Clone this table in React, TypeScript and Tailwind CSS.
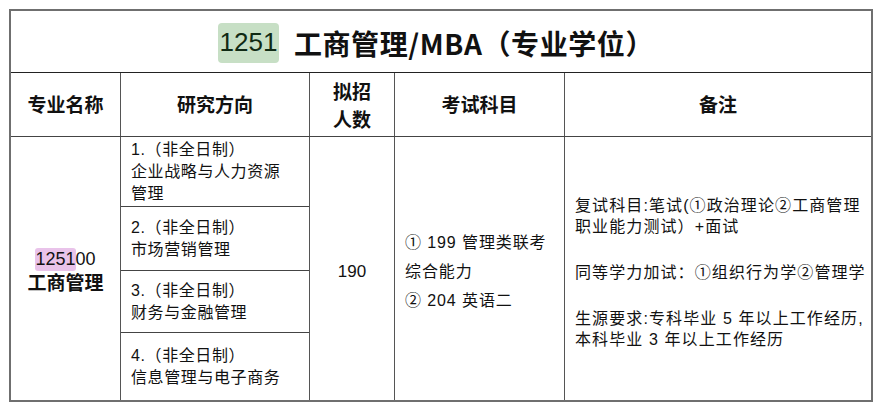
const cjk = "font-['Liberation_Sans','Noto_Sans_CJK_SC',sans-serif]";

const directions = [
  { h: "h-[70px]", lines: ["1.（非全日制）", "企业战略与人力资源", "管理"] },
  { h: "h-[64px]", lines: ["2.（非全日制）", "市场营销管理"] },
  { h: "h-[62px]", lines: ["3.（非全日制）", "财务与金融管理"] },
  { h: "h-[67px]", lines: ["4.（非全日制）", "信息管理与电子商务"] },
];

const headers = ["专业名称", "研究方向", null, "考试科目", "备注"];

export default function App() {
  return (
    <div className={`min-h-[414px] w-[887px] bg-white pt-[9px] pl-[9px] text-[#111] ${cjk}`}>
      <div className="w-[864px] border-2 border-[#6f6f6f]">
        {/* Title */}
        <div className="flex h-[62px] items-center justify-center border-b border-[#222] pr-[10px] pt-[2px]">
          <span className="mr-[15px] flex h-[40px] w-[61px] items-center justify-center rounded-[4px] bg-[#c7dfc5] font-['Liberation_Sans'] text-[26px] text-[#102a14]">
            1251
          </span>
          <span className="font-['Noto_Sans_CJK_SC'] text-[28px] font-semibold leading-none tracking-[0.6px]">
            工商管理/MBA（专业学位）
          </span>
        </div>

        {/* Header */}
        <div className="grid h-[64px] grid-cols-[110px_189px_85px_170px_1fr] border-b border-[#444] font-['Noto_Sans_CJK_SC'] text-[19px] font-bold">
          {headers.map((h, i) => (
            <div
              key={i}
              className={`flex items-center justify-center ${i < 4 ? "border-r border-[#555]" : ""}`}
            >
              {h ?? (
                <span className="text-center leading-[28px]">
                  拟招
                  <br />
                  人数
                </span>
              )}
            </div>
          ))}
        </div>

        {/* Body */}
        <div className="grid grid-cols-[110px_189px_85px_170px_1fr] text-[16px]">
          <div className="flex flex-col items-center justify-center border-r border-[#555] pt-[4px]">
            <span className="font-['Liberation_Sans'] text-[18px] leading-[22px]">
              <span className="rounded-[3px] bg-[#e9c3ea] pb-[2px] pt-[1px]">1251</span>00
            </span>
            <span className="font-['Noto_Sans_CJK_SC'] text-[19px] font-bold leading-[24px]">工商管理</span>
          </div>

          <div className="flex flex-col border-r border-[#555]">
            {directions.map((d, i) => (
              <div
                key={i}
                className={`flex ${d.h} flex-col justify-center pl-[10px] leading-[22px] tracking-[0.6px] ${
                  i < directions.length - 1 ? "border-b border-[#444]" : ""
                }`}
              >
                {d.lines.map((l) => (
                  <span key={l} className="whitespace-nowrap">
                    {l}
                  </span>
                ))}
              </div>
            ))}
          </div>

          <div className="flex items-center justify-center border-r border-[#555] pt-[6px] font-['Liberation_Sans'] text-[17px]">
            190
          </div>

          <div className="flex flex-col justify-center border-r border-[#555] pl-[10px] pt-[5px] leading-[29px] tracking-[0.9px]">
            <span className="whitespace-nowrap">① 199 管理类联考</span>
            <span>综合能力</span>
            <span className="whitespace-nowrap">② 204 英语二</span>
          </div>

          <div className="flex flex-col justify-center pl-[10px] pt-[8px] leading-[21px] tracking-[1.1px]">
            <p className="whitespace-nowrap">
              复试科目:笔试(①政治理论②工商管理
              <br />
              职业能力测试）+面试
            </p>
            <p className="mt-[25px] whitespace-nowrap">同等学力加试：①组织行为学②管理学</p>
            <p className="mt-[25px] whitespace-nowrap">
              生源要求:专科毕业 5 年以上工作经历,
              <br />
              本科毕业 3 年以上工作经历
            </p>
          </div>
        </div>
      </div>
    </div>
  );
}
